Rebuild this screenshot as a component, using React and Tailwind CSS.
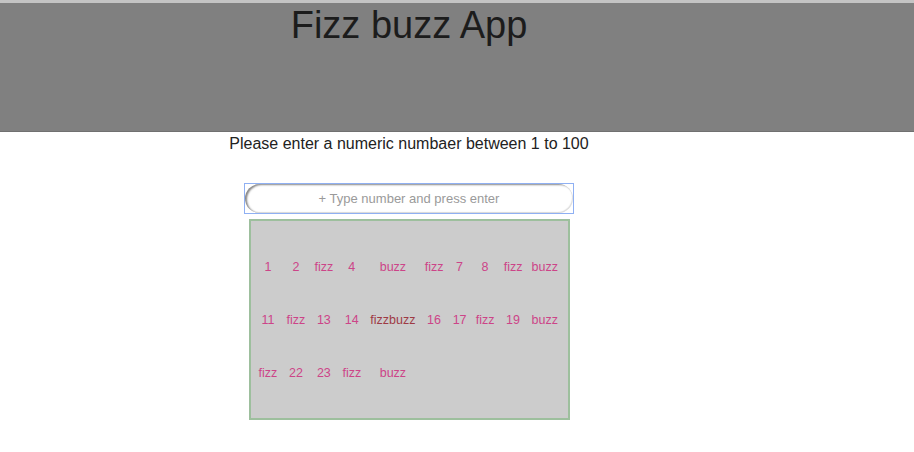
import { useState } from 'react'

function label(n) {
  if (n % 15 === 0) return 'fizzbuzz'
  if (n % 3 === 0) return 'fizz'
  if (n % 5 === 0) return 'buzz'
  return String(n)
}

export default function App() {
  const [value, setValue] = useState('')
  const [count, setCount] = useState(25)

  function handleKey(e) {
    if (e.key !== 'Enter') return
    const n = parseInt(value, 10)
    if (n >= 1 && n <= 100) setCount(n)
    setValue('')
  }

  const items = Array.from({ length: count }, (_, i) => label(i + 1))

  return (
    <div className="min-h-screen bg-white font-['Liberation_Sans',Arial,sans-serif]">
      {/* Header */}
      <div className="h-[132px] bg-[#808080] border-t-[3px] border-[#c4c4c4] border-b border-b-[#707070]">
        <div className="w-[818px] text-center">
          <h1 className="text-[38px] leading-[44px] text-[#1c1c1c] font-normal">Fizz buzz App</h1>
        </div>
      </div>

      <div className="w-[818px] flex flex-col items-center">
        <p className="mt-[2px] text-[16px] leading-[20px] text-[#222]">
          Please enter a numeric numbaer between 1 to 100
        </p>

        <div className="mt-[29px] w-[330px] h-[31px] border border-[#8fb0f3]">
          <input
            value={value}
            onChange={e => setValue(e.target.value)}
            onKeyDown={handleKey}
            placeholder="+ Type number and press enter"
            className="w-full h-full rounded-full bg-white text-center text-[13px] text-[#444] placeholder:text-[#9a9a9a] outline-none shadow-[inset_2px_1px_2px_#888,inset_-1px_-1px_1px_#ddd]"
          />
        </div>

        {/* Results */}
        <div className="mt-[5px] ml-[1px] w-[321px] h-[201px] bg-[#cccccc] border-2 border-[#9dbf9d] pt-[20px] pl-[3px]">
          <div className="grid grid-cols-[repeat(10,auto)] justify-start justify-items-center">
            {items.map((t, i) => (
              <span
                key={i}
                className={`px-[4.6px] text-[12.5px] leading-[53px] ${t === 'fizzbuzz' ? 'text-[#9e3a44]' : 'text-[#cc4488]'}`}
              >
                {t}
              </span>
            ))}
          </div>
        </div>
      </div>
    </div>
  )
}
